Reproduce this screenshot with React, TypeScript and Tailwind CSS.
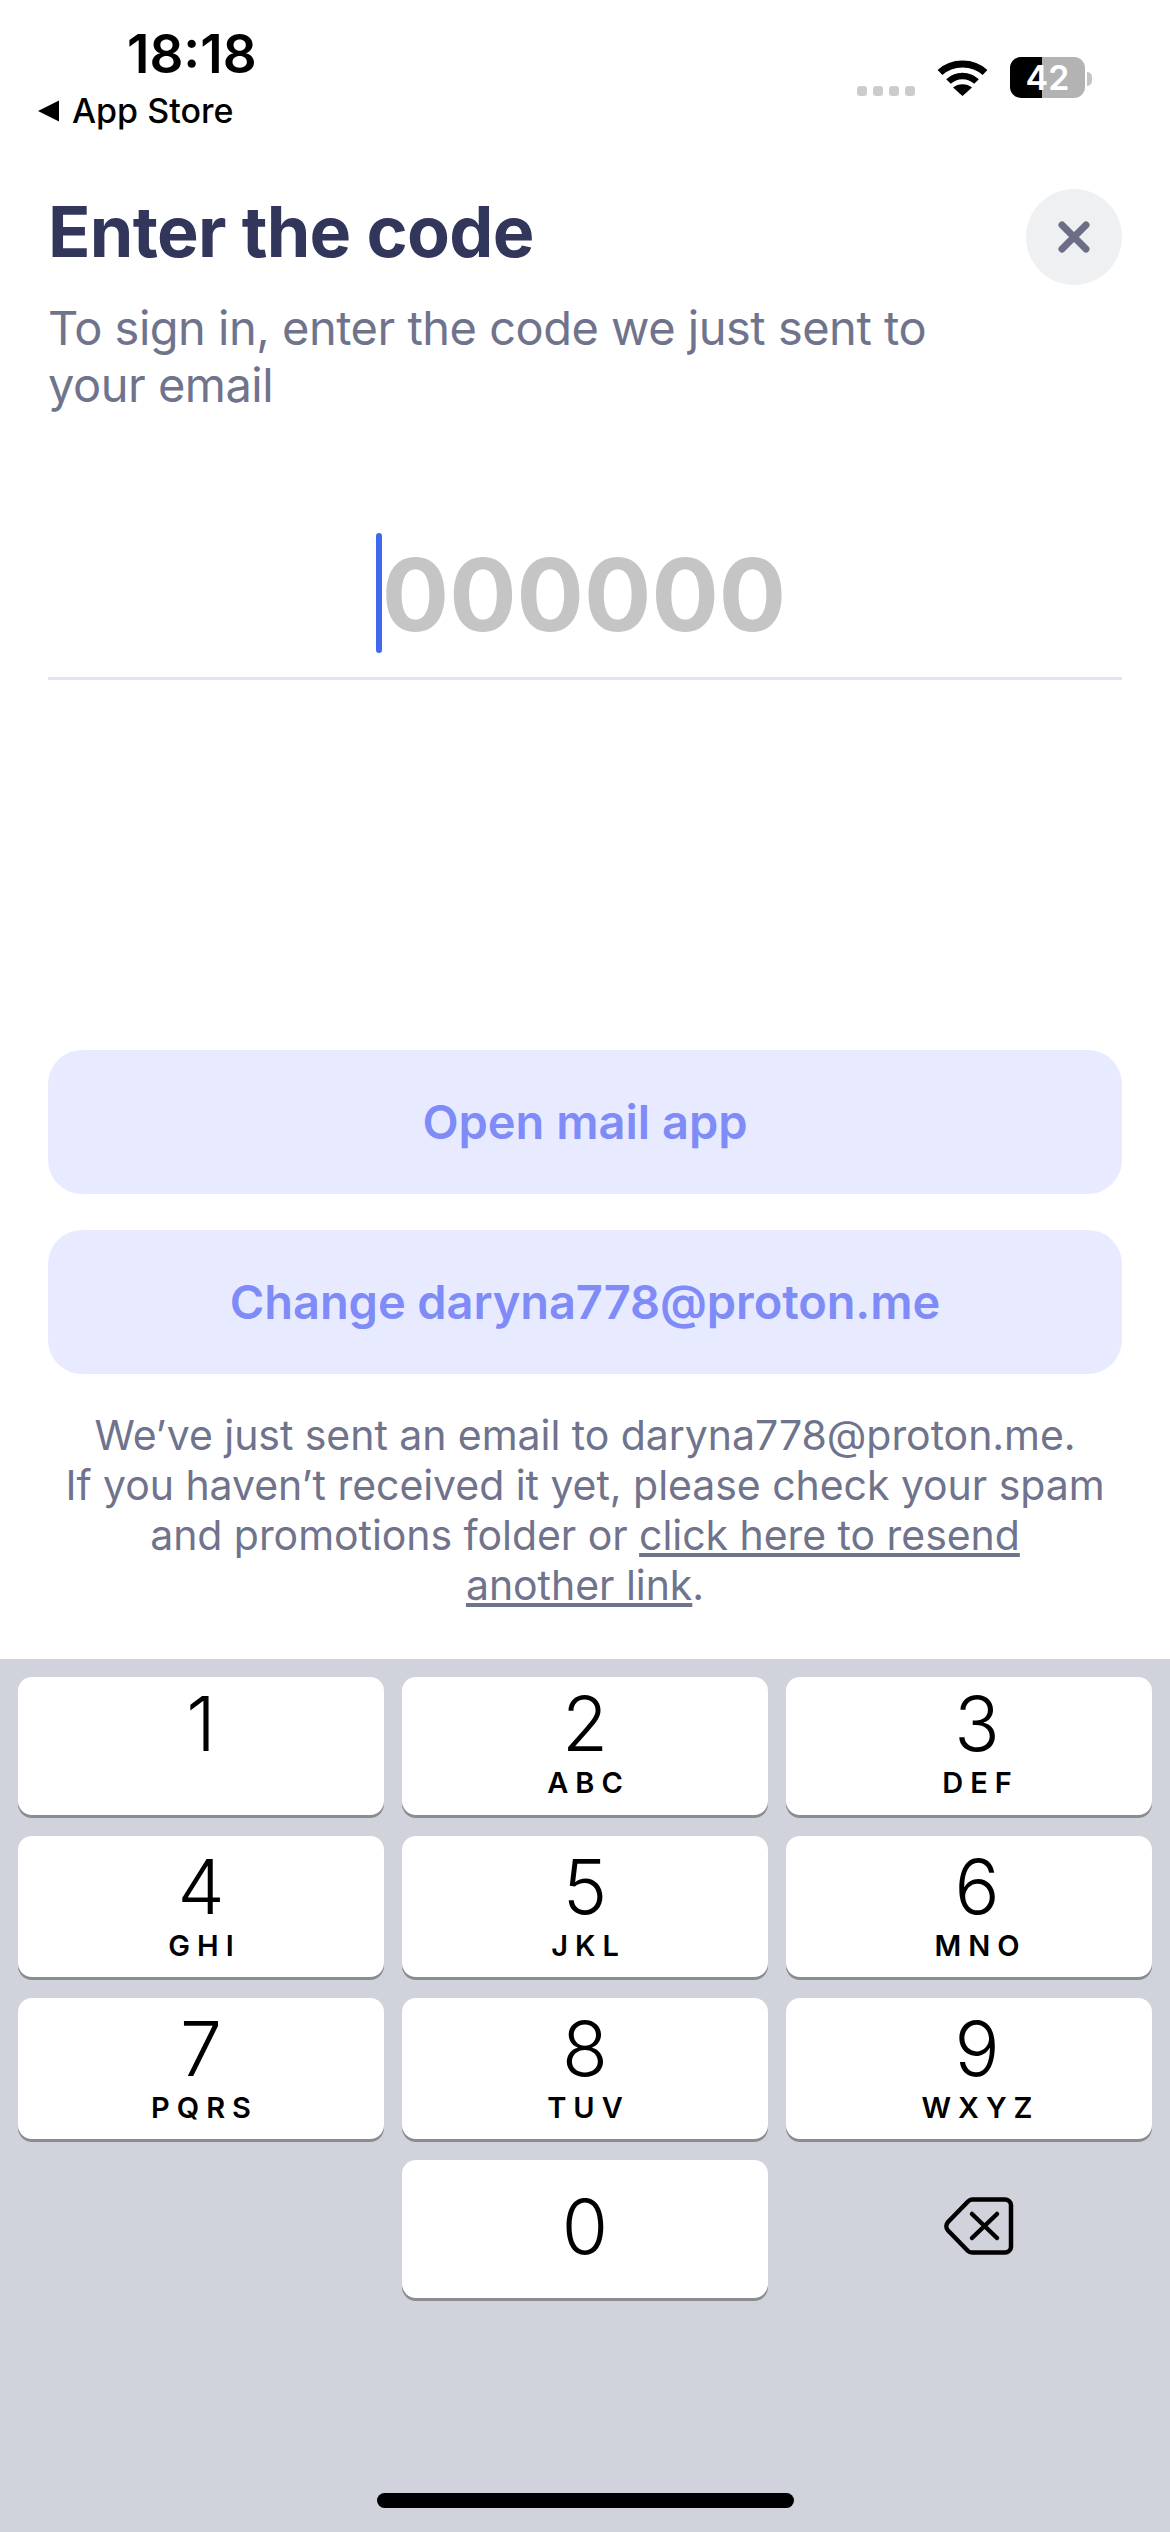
import React from "react";

const font = { fontFamily: "Inter, 'Liberation Sans', sans-serif" };

function Key({ d, l, h, pt, third }: { d: string; l?: string; h: string; pt: string; third?: boolean }) {
  return (
    <div className={`flex flex-col items-center rounded-[14px] bg-white shadow-[0_3px_0_#8b8c90] ${h} ${pt} ${third ? "pl-[16px]" : "pl-0"}`}>
      <span className="mt-[2px] block h-[62px] text-[75px] leading-[62px] font-light text-black">{d}</span>
      {l ? <span className="mt-[16px] block h-[24px] pl-[7px] text-[29px] leading-[24px] font-semibold tracking-[7px] text-black">{l}</span> : null}
    </div>
  );
}

export default function App() {
  return (
    <div className="flex h-[2532px] w-[1170px] flex-col overflow-hidden bg-white" style={font}>
      <div className="flex h-[189px] shrink-0 justify-between">
        <div className="flex flex-col">
          <div className="ml-[127px] mt-[26px] text-[53px] leading-[56px] font-semibold text-black">18:18</div>
          <div className="ml-[37px] mt-[8px] flex items-center gap-[12px]">
            <svg width="23" height="22" viewBox="0 0 23 22"><path d="M22 0.500V21.500L1 11Z" fill="#000" /></svg>
            <span className="text-[34px] leading-[42px] font-medium text-black">App Store</span>
          </div>
        </div>
        <div className="mr-[78px] mt-[57px] flex h-[41px] items-end">
          <div className="mb-[2px] flex gap-[6px]">
            <div className="h-[10px] w-[10px] rounded-[3px] bg-[#cccccc]" />
            <div className="h-[10px] w-[10px] rounded-[3px] bg-[#cccccc]" />
            <div className="h-[10px] w-[10px] rounded-[3px] bg-[#cccccc]" />
            <div className="h-[10px] w-[10px] rounded-[3px] bg-[#cccccc]" />
          </div>
          <svg className="ml-[22px] mb-[2px]" width="51" height="37" viewBox="0 0 51 37" fill="none">
            <path d="M3 13.500C15 2 36 2 48 13.500" stroke="#000" strokeWidth="7" />
            <path d="M11.500 22.500C19 15 32 15 39.500 22.500" stroke="#000" strokeWidth="6.500" />
            <path d="M25.500 37L16 28.500C21 24 30 24 35 28.500Z" fill="#000" />
          </svg>
          <div className="relative ml-[22px] flex h-[41px] w-[75px] overflow-hidden rounded-[11px]">
            <div className="h-full w-[32px] bg-black" />
            <div className="h-full flex-1 bg-[#b3b3b3]" />
            <span className="absolute inset-0 flex items-center justify-center text-[34px] leading-none font-semibold text-white">42</span>
          </div>
          <div className="mb-[12px] ml-[2px] h-[14px] w-[5px] rounded-r-full bg-[#c4c4c4]" />
        </div>
      </div>

      <div className="flex h-[96px] shrink-0 justify-between pl-[48px] pr-[48px]">
        <h1 className="mt-[3px] text-[70px] leading-[80px] font-bold tracking-[-0.7px] text-[#32365a]">Enter the code</h1>
        <div className="flex h-[96px] w-[96px] items-center justify-center rounded-full bg-[#eef0f2]">
          <svg width="36" height="36" viewBox="0 0 36 36" fill="none">
            <path d="M6 6L30 30M30 6L6 30" stroke="#6c6e88" strokeWidth="7" strokeLinecap="round" />
          </svg>
        </div>
      </div>

      <p className="mt-[14px] w-[1000px] pl-[48px] text-[47px] leading-[57px] tracking-[-0.5px] text-[#70738c]">
        To sign in, enter the code we just sent to your email
      </p>

      <div className="mx-[48px] mt-[120px] flex h-[147px] shrink-0 justify-center border-b-[3px] border-[#e3e3f0] pr-[8px]">
        <div className="flex h-[120px] items-center">
          <div className="h-[120px] w-[6px] rounded-full bg-[#4169ee]" />
          <span className="mt-[3px] text-[100px] leading-[120px] font-bold text-[#c5c5c6]">000000</span>
        </div>
      </div>

      <div className="mx-[48px] mt-[370px] flex h-[144px] shrink-0 items-center justify-center rounded-[34px] bg-[#e8ebff] text-[47px] font-semibold text-[#7f8cf8]">
        Open mail app
      </div>
      <div className="mx-[48px] mt-[36px] flex h-[144px] shrink-0 items-center justify-center rounded-[34px] bg-[#e8ebff] text-[47px] font-semibold tracking-[-0.1px] text-[#7f8cf8]">
        Change daryna778@proton.me
      </div>

      <p className="mx-[48px] mt-[36px] text-center text-[41px] leading-[50px] tracking-[-0.05px] text-[#70738c]">
        We’ve just sent an email to daryna778@proton.me.
        <br />
        If you haven’t received it yet, please check your spam
        <br />
        and promotions folder or <span className="underline">click here to resend</span>
        <br />
        <span className="underline">another link</span>.
      </p>

      <div className="mt-auto flex h-[873px] shrink-0 flex-col bg-[#d0d3db] px-[18px] pt-[18px]">
        <div className="grid grid-cols-3 gap-x-[18px] gap-y-[21px]">
          <Key d="1" h="h-[138px]" pt="pt-[14px]" />
          <Key d="2" l="ABC" h="h-[138px]" pt="pt-[14px]" />
          <Key d="3" l="DEF" h="h-[138px]" pt="pt-[14px]" third />
          <Key d="4" l="GHI" h="h-[141px]" pt="pt-[18px]" />
          <Key d="5" l="JKL" h="h-[141px]" pt="pt-[18px]" />
          <Key d="6" l="MNO" h="h-[141px]" pt="pt-[18px]" third />
          <Key d="7" l="PQRS" h="h-[141px]" pt="pt-[18px]" />
          <Key d="8" l="TUV" h="h-[141px]" pt="pt-[18px]" />
          <Key d="9" l="WXYZ" h="h-[141px]" pt="pt-[18px]" third />
          <div />
          <Key d="0" h="h-[138px]" pt="pt-[34px]" />
          <div className="flex h-[138px] items-center justify-center pb-[6px] pl-[20px]">
            <svg width="70" height="58" viewBox="0 0 70 58" fill="none">
              <path d="M28 2.500H61C64 2.500 67 5 67 8V50C67 53 64 55.500 61 55.500H28C26.500 55.500 25 55 24 54L4 33.500C1.800 31 1.800 27.500 4 25L24 4.500C25 3.500 26.500 2.500 28 2.500Z" stroke="#000" strokeWidth="4.500" strokeLinejoin="round" />
              <path d="M28 17L53 41M53 17L28 41" stroke="#000" strokeWidth="4.500" strokeLinecap="round" />
            </svg>
          </div>
        </div>
        <div className="mx-auto mt-[195px] h-[15px] w-[417px] rounded-full bg-black" />
      </div>
    </div>
  );
}
